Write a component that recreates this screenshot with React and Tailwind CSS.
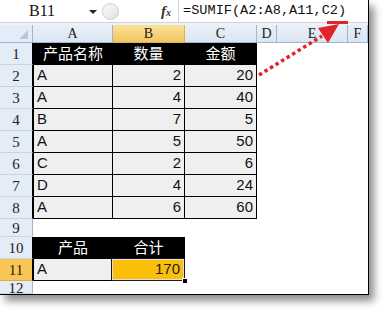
import React from 'react'

const cols = [
  { key: 'A', w: 'w-[80px]' },
  { key: 'B', w: 'w-[72px]' },
  { key: 'C', w: 'w-[72px]' },
  { key: 'D', w: 'w-[20px]' },
  { key: 'E', w: 'w-[71px]' },
  { key: 'F', w: 'w-[20px]' },
]

const data = [
  ['A', 2, 20],
  ['A', 4, 40],
  ['B', 7, 5],
  ['A', 5, 50],
  ['C', 2, 6],
  ['D', 4, 24],
  ['A', 6, 60],
]

const mono = { fontFamily: '"Liberation Mono", "Noto Sans CJK SC", monospace' }
const serif = { fontFamily: '"Liberation Serif", "Noto Sans CJK SC", serif' }
const sans = { fontFamily: '"Liberation Sans", "Noto Sans CJK SC", sans-serif' }

function RowHead({ n, h, active, dark }) {
  return (
    <div
      style={serif}
      className={`${h} w-[33px] shrink-0 flex items-center justify-center pt-[2px] text-[15px] text-[#222] border-b border-r ${
        dark ? 'border-r-black' : 'border-r-[#9eb6ce]'
      } ${active ? 'bg-[#f8c654] border-b-[#e0a93a]' : 'bg-[#e4ecf7] border-b-[#c6d3e3]'}`}
    >
      {n}
    </div>
  )
}

function HeadCell({ w, first, top, children }) {
  return (
    <div
      style={sans}
      className={`${w} h-full shrink-0 flex items-center justify-center bg-black text-white text-[15px] border-r border-b border-black ${
        first ? 'border-l' : ''
      } ${top ? 'border-t' : ''}`}
    >
      {children}
    </div>
  )
}

function DataCell({ w, first, right, children }) {
  return (
    <div
      style={sans}
      className={`${w} h-full shrink-0 flex items-center bg-[#efefef] text-[#111] text-[15px] border-r border-b border-black ${
        first ? 'border-l' : ''
      } ${right ? 'justify-end pr-[3px]' : 'justify-start pl-[3px]'}`}
    >
      {children}
    </div>
  )
}

function Blank({ w }) {
  return <div className={`${w} h-full shrink-0`} />
}

export default function App() {
  return (
    <div className="relative w-[390px] h-[316px] overflow-hidden bg-white">
      <div className="w-[369px] h-[295px] flex flex-col bg-white border-r border-b border-black shadow-[5px_6px_8px_rgba(0,0,0,0.45)]">
        {/* formula bar */}
        <div className="h-[22px] shrink-0 flex items-stretch bg-white">
          <div className="relative w-[102px] flex items-center">
            <span style={serif} className="ml-[29px] text-[16px] text-[#111]">B11</span>
            <span className="absolute left-[89px] top-[10px] w-0 h-0 border-l-[4px] border-r-[4px] border-t-[4px] border-l-transparent border-r-transparent border-t-[#222]" />
          </div>
          <div className="w-[76px] flex items-center">
            <div className="w-[17px] h-[17px] rounded-full border border-[#c9ced4] bg-gradient-to-br from-[#fafafa] to-[#dfe3e7]" />
            <span className="ml-[42px] text-[15px] font-bold italic text-[#333]" style={serif}>
              f<span className="text-[10px]">x</span>
            </span>
          </div>
          <div className="w-px bg-[#d2d7dd]" />
          <div className="flex items-center pl-[4px]">
            <span style={mono} className="text-[13.6px] text-[#111]">=SUMIF(A2:A8,A11,C2)</span>
          </div>
        </div>
        <div className="h-[3px] shrink-0 bg-[#eef1f5] border-t border-[#cfd6de]" />

        {/* column header */}
        <div className="h-[18px] shrink-0 flex">
          <div className="relative w-[33px] shrink-0 bg-[#e4ecf7] border-r border-b border-[#9eb6ce]">
            <svg className="absolute right-[4px] bottom-[3px]" width="9" height="9" viewBox="0 0 9 9">
              <polygon points="9,0 9,9 0,9" fill="#b8c7d9" />
            </svg>
          </div>
          {cols.map((c) => (
            <div
              key={c.key}
              style={serif}
              className={`${c.w} shrink-0 flex items-center justify-center text-[14px] text-[#222] border-r border-b ${
                c.key === 'B'
                  ? 'bg-gradient-to-b from-[#fae29a] to-[#f3c55c] border-[#e0b152]'
                  : 'bg-gradient-to-b from-[#eaf0f8] to-[#dbe5f1] border-[#9eb6ce]'
              }`}
            >
              {c.key}
            </div>
          ))}
        </div>

        {/* row 1 */}
        <div className="h-[22px] shrink-0 flex">
          <RowHead n={1} h="h-[22px]" dark />
          <HeadCell w="w-[80px]" first top>产品名称</HeadCell>
          <HeadCell w="w-[72px]" top>数量</HeadCell>
          <HeadCell w="w-[72px]" top>金额</HeadCell>
          <Blank w="w-[20px]" />
          <Blank w="w-[71px]" />
          <Blank w="w-[20px]" />
        </div>

        {/* rows 2-8 */}
        {data.map((r, i) => (
          <div key={i} className="h-[22px] shrink-0 flex">
            <RowHead n={i + 2} h="h-[22px]" dark />
            <DataCell w="w-[80px]" first>{r[0]}</DataCell>
            <DataCell w="w-[72px]" right>{r[1]}</DataCell>
            <DataCell w="w-[72px]" right>{r[2]}</DataCell>
            <Blank w="w-[20px]" />
            <Blank w="w-[71px]" />
            <Blank w="w-[20px]" />
          </div>
        ))}

        {/* row 9 */}
        <div className="h-[18px] shrink-0 flex">
          <RowHead n={9} h="h-[18px]" />
        </div>

        {/* row 10 */}
        <div className="h-[22px] shrink-0 flex">
          <RowHead n={10} h="h-[22px]" dark />
          <HeadCell w="w-[80px]" first top>产品</HeadCell>
          <HeadCell w="w-[72px]" top>合计</HeadCell>
        </div>

        {/* row 11 */}
        <div className="h-[22px] shrink-0 flex">
          <RowHead n={11} h="h-[22px]" active dark />
          <DataCell w="w-[80px]" first>A</DataCell>
          <div
            style={sans}
            className="relative w-[72px] h-full shrink-0 flex items-center justify-end pr-[4px] bg-[#fbbf0a] text-[#222] text-[15px] border-r border-b border-black"
          >
            170
            <div className="absolute left-[-2px] top-[-1px] right-[-1px] bottom-[-1px] border border-[#1b1b1b] shadow-[inset_0_0_0_1px_#dedede]" />
            <div className="absolute right-[-4px] bottom-[-4px] w-[6px] h-[6px] bg-black border border-white" />
          </div>
        </div>

        {/* row 12 */}
        <div className="flex-1 flex">
          <RowHead n={12} h="h-[13px]" />
        </div>
      </div>

      {/* red dotted arrow */}
      <svg className="absolute left-0 top-0 pointer-events-none" width="390" height="316" viewBox="0 0 390 316">
        <line x1="259" y1="75" x2="322" y2="36" stroke="#e2222c" strokeWidth="3.5" strokeDasharray="3.5 3" />
        <polygon points="339,24 318,28 328,43" fill="#e2222c" />
        <rect x="327" y="21" width="21" height="3" fill="#e2222c" />
      </svg>
    </div>
  )
}
